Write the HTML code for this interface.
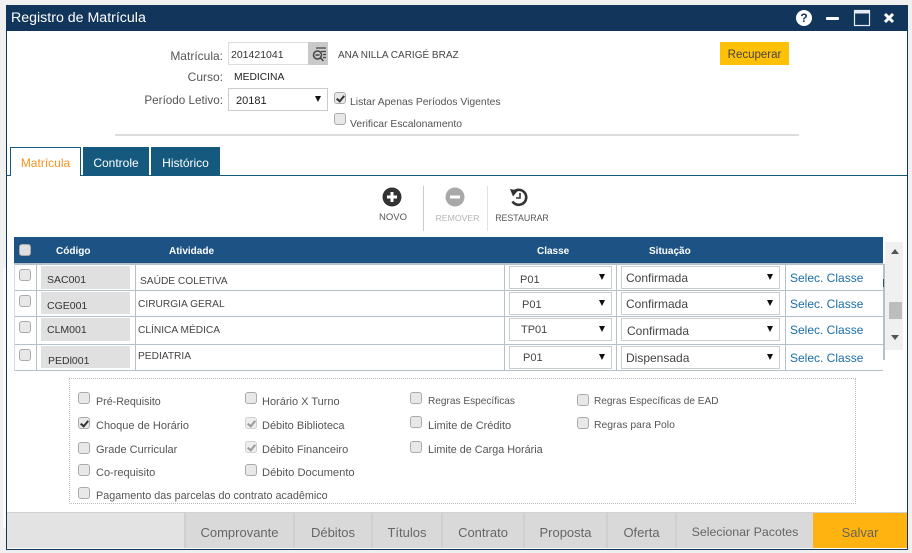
<!DOCTYPE html>
<html lang="pt">
<head>
<meta charset="utf-8">
<title>Registro de Matrícula</title>
<style>
html,body{margin:0;padding:0}
body{width:912px;height:553px;position:relative;overflow:hidden;background:#f0f0f0;font-family:"Liberation Sans",sans-serif;color:#444}
.a{position:absolute}
.t{position:absolute;white-space:nowrap;font-size:11px;line-height:14px;color:#555}
.r{text-align:right}
.cb{position:absolute;width:12px;height:12px;box-sizing:border-box;border:1px solid #aaa;border-radius:3px;background:#e8e8e8}
.cb.c::after{content:"";position:absolute;left:3px;top:1px;width:3px;height:6px;border:solid #333;border-width:0 2px 2px 0;transform:rotate(40deg)}
.cb.d{border-color:#d0d0d0;background:#eee}
.cb.d::after{border-color:#9a9a9a}
.sel{position:absolute;box-sizing:border-box;border:1px solid #ccc;background:#fff}
.arr{position:absolute;width:0;height:0;border-left:3px solid transparent;border-right:3px solid transparent;border-top:6px solid #111}
.hl{position:absolute;left:14px;width:869px;height:1px;background:#b4c2c7}
.vl{position:absolute;top:264px;height:107px;width:1px;background:#b4c2c7}
.code{position:absolute;left:41px;width:89px;background:#e0e0e0}
.lnk{position:absolute;left:790px;font-size:12px;line-height:14px;color:#1a6ea8;white-space:nowrap}
.fb{position:absolute;top:513px;height:35px;background:#d9d9d9;text-align:center;font-size:13px;line-height:39px;color:#666;box-sizing:border-box;border-left:2px solid #cfcfcf}
.h{position:absolute;white-space:nowrap;top:245px;line-height:14px;color:#fff;font-weight:bold;font-size:10px}
.cd{position:absolute;white-space:nowrap;font-size:10.500px;line-height:14px;color:#333}
.ac{position:absolute;white-space:nowrap;font-size:10.200px;line-height:14px;color:#444}
.cl{position:absolute;white-space:nowrap;font-size:11px;line-height:14px;color:#444}
.si{position:absolute;white-space:nowrap;font-size:12px;line-height:14px;color:#444}
</style>
</head>
<body>
<div class="a" style="left:3px;top:268px;width:3px;height:260px;background:#fafafa"></div>
<div class="a" style="left:6px;top:5px;width:902px;height:545px;background:#fff;box-sizing:border-box;border:1px solid #12355b"></div>
<div class="a" style="left:6px;top:5px;width:902px;height:26px;background:#12355b"></div>
<div class="t" style="left:11px;top:9px;font-size:14.200px;line-height:18px;color:#fff">Registro de Matrícula</div>

<svg class="a" style="left:790px;top:5px" width="110" height="26" viewBox="0 0 110 26">
<circle cx="14" cy="13" r="8" fill="#fff"/>
<text x="14" y="17" text-anchor="middle" font-family="Liberation Sans" font-weight="bold" font-size="12" fill="#12355b">?</text>
<rect x="36" y="12" width="13" height="3" rx="1" fill="#fff"/>
<rect x="64.500" y="5.500" width="15" height="15" fill="none" stroke="#e6eef5" stroke-width="1.200"/>
<rect x="64.500" y="5.500" width="15" height="3" fill="#e6eef5"/>
<path d="M95 9l8 8M103 9l-8 8" stroke="#fff" stroke-width="3"/>
</svg>

<div class="t r" style="left:120px;width:103px;top:49px;font-size:12px">Matrícula:</div>
<div class="a" style="left:228px;top:42px;width:80px;height:23px;box-sizing:border-box;border:1px solid #ddd;border-right:0"></div>
<div class="t" style="left:231px;top:48px;font-size:10.500px;color:#333">201421041</div>
<div class="a" style="left:308px;top:42px;width:20px;height:23px;background:#c9c9c9"></div>
<svg class="a" style="left:310px;top:45px" width="18" height="18" viewBox="0 0 18 18">
<path d="M6 3h10M11 6.500h5M13 9.500h3M13 12.500h3" stroke="#444" stroke-width="1.300" fill="none"/>
<circle cx="7.500" cy="10" r="4" stroke="#444" stroke-width="1.500" fill="none"/>
<path d="M5.500 10h4M10.500 13l3 3" stroke="#444" stroke-width="1.500"/>
</svg>
<div class="t" style="left:338px;top:49px;font-size:10px;color:#444">ANA NILLA CARIGÉ BRAZ</div>
<div class="a" style="left:720px;top:42px;width:69px;height:23px;background:#ffc107"></div>
<div class="t" style="left:720px;width:69px;text-align:center;top:48px;font-size:11.500px;color:#444">Recuperar</div>

<div class="t r" style="left:120px;width:103px;top:70px;font-size:12px">Curso:</div>
<div class="t" style="left:234px;top:71px;font-size:10.300px;color:#222">MEDICINA</div>

<div class="t r" style="left:120px;width:103px;top:94px;font-size:11.700px">Período Letivo:</div>
<div class="sel" style="left:228px;top:88px;width:100px;height:23px"></div>
<div class="t" style="left:236px;top:94px;font-size:11px;color:#222">20181</div>
<div class="arr" style="left:315px;top:96px"></div>
<div class="cb c" style="left:334px;top:92px"></div>
<div class="t" style="left:350px;top:96px;font-size:10.400px">Listar Apenas Períodos Vigentes</div>
<div class="cb" style="left:334px;top:113px"></div>
<div class="t" style="left:350px;top:118px;font-size:10.400px">Verificar Escalonamento</div>
<div class="a" style="left:115px;top:134px;width:684px;height:2px;background:#ddd"></div>

<div class="a" style="left:7px;top:175px;width:900px;height:1px;background:#155a7e"></div>
<div class="a" style="left:10px;top:147px;width:71px;height:29px;box-sizing:border-box;background:#fff;border:1px solid #155a7e;border-bottom:0"></div>
<div class="t" style="left:10px;width:71px;text-align:center;top:156px;font-size:12px;color:#f7931e">Matrícula</div>
<div class="a" style="left:83px;top:147px;width:66px;height:28px;background:#155a7e"></div>
<div class="t" style="left:83px;width:66px;text-align:center;top:156px;font-size:12px;color:#fff">Controle</div>
<div class="a" style="left:151px;top:147px;width:69px;height:28px;background:#155a7e"></div>
<div class="t" style="left:151px;width:69px;text-align:center;top:156px;font-size:12px;color:#fff">Histórico</div>

<svg class="a" style="left:380px;top:186px" width="170" height="24" viewBox="0 0 170 24">
<circle cx="12" cy="11" r="9.500" fill="#333"/>
<path d="M12 6v10M7 11h10" stroke="#fff" stroke-width="3"/>
<circle cx="75" cy="11" r="9.500" fill="#a9a9a9"/>
<path d="M70 11h10" stroke="#fff" stroke-width="3"/>
<path d="M134 5.500a7.500 7.500 0 1 1-1.500 10" fill="none" stroke="#333" stroke-width="2.600"/>
<path d="M130 3l8 1.500-5 6z" fill="#333"/>
<path d="M140 7v5h-4" fill="none" stroke="#333" stroke-width="1.600"/>
</svg>
<div class="a" style="left:423px;top:186px;width:1px;height:45px;background:#ccc"></div>
<div class="a" style="left:487px;top:186px;width:1px;height:45px;background:#e2e2e2"></div>
<div class="t" style="left:372px;width:42px;text-align:center;top:211px;font-size:9.500px">NOVO</div>
<div class="t" style="left:430px;width:55px;text-align:center;top:211px;font-size:8.700px;color:#b5b5b5">REMOVER</div>
<div class="t" style="left:490px;width:64px;text-align:center;top:211px;font-size:8.800px">RESTAURAR</div>

<div class="a" style="left:14px;top:237px;width:869px;height:26px;background:#1c5384"></div>
<div class="cb" style="left:19px;top:244px;background:#e0e0e0"></div>
<div class="h" style="left:56px">Código</div>
<div class="h" style="left:169px">Atividade</div>
<div class="h" style="left:537px">Classe</div>
<div class="h" style="left:649px">Situação</div>

<div class="hl" style="top:263px;height:2px"></div>
<div class="hl" style="top:290px"></div>
<div class="hl" style="top:316px"></div>
<div class="hl" style="top:344px"></div>
<div class="hl" style="top:370px"></div>
<div class="vl" style="left:14px;background:#d5dde0"></div>
<div class="vl" style="left:36px"></div>
<div class="vl" style="left:135px"></div>
<div class="vl" style="left:504px"></div>
<div class="vl" style="left:616px"></div>
<div class="vl" style="left:785px"></div>
<div class="vl" style="left:883px;width:2px;height:96px"></div>
<div class="a" style="left:883px;top:279px;width:1px;height:8px;background:#1c5384"></div>

<div class="cb" style="left:19px;top:269px"></div>
<div class="code" style="top:266px;height:23px"></div>
<div class="cd" style="left:47px;top:273px">SAC001</div>
<div class="ac" style="left:140px;top:275px">SAÚDE COLETIVA</div>
<div class="sel" style="left:509px;top:266px;width:103px;height:23px"></div>
<div class="cl" style="left:520px;top:273px">P01</div>
<div class="arr" style="left:599px;top:274px"></div>
<div class="sel" style="left:621px;top:266px;width:159px;height:23px"></div>
<div class="si" style="left:626px;top:271px">Confirmada</div>
<div class="arr" style="left:767px;top:274px"></div>
<div class="lnk" style="top:271px">Selec. Classe</div>

<div class="cb" style="left:19px;top:295px"></div>
<div class="code" style="top:292px;height:22px"></div>
<div class="cd" style="left:47px;top:299px">CGE001</div>
<div class="ac" style="left:138px;top:298px">CIRURGIA GERAL</div>
<div class="sel" style="left:509px;top:292px;width:103px;height:23px"></div>
<div class="cl" style="left:522px;top:298px">P01</div>
<div class="arr" style="left:599px;top:300px"></div>
<div class="sel" style="left:621px;top:292px;width:159px;height:23px"></div>
<div class="si" style="left:626px;top:297px">Confirmada</div>
<div class="arr" style="left:767px;top:300px"></div>
<div class="lnk" style="top:297px">Selec. Classe</div>

<div class="cb" style="left:19px;top:321px"></div>
<div class="code" style="top:318px;height:23px"></div>
<div class="cd" style="left:47px;top:323px">CLM001</div>
<div class="ac" style="left:138px;top:324px">CLÍNICA MÉDICA</div>
<div class="sel" style="left:509px;top:318px;width:103px;height:23px"></div>
<div class="cl" style="left:521px;top:323px">TP01</div>
<div class="arr" style="left:599px;top:326px"></div>
<div class="sel" style="left:621px;top:318px;width:159px;height:23px"></div>
<div class="si" style="left:627px;top:324px">Confirmada</div>
<div class="arr" style="left:767px;top:326px"></div>
<div class="lnk" style="top:323px">Selec. Classe</div>

<div class="cb" style="left:19px;top:349px"></div>
<div class="code" style="top:346px;height:22px"></div>
<div class="cd" style="left:48px;top:354px">PEDl001</div>
<div class="ac" style="left:138px;top:350px">PEDIATRIA</div>
<div class="sel" style="left:509px;top:346px;width:103px;height:23px"></div>
<div class="cl" style="left:523px;top:351px">P01</div>
<div class="arr" style="left:599px;top:354px"></div>
<div class="sel" style="left:621px;top:346px;width:159px;height:23px"></div>
<div class="si" style="left:626px;top:351px">Dispensada</div>
<div class="arr" style="left:767px;top:354px"></div>
<div class="lnk" style="top:351px">Selec. Classe</div>

<div class="a" style="left:885px;top:242px;width:18px;height:108px;background:#f0f0f0"></div>
<div class="a" style="left:889px;top:302px;width:13px;height:17px;background:#bdbdbd"></div>
<div class="a" style="left:891px;top:249px;width:0;height:0;border-left:4px solid transparent;border-right:4px solid transparent;border-bottom:5px solid #555"></div>
<div class="a" style="left:891px;top:335px;width:0;height:0;border-left:4px solid transparent;border-right:4px solid transparent;border-top:5px solid #555"></div>

<div class="a" style="left:69px;top:378px;width:787px;height:126px;box-sizing:border-box;border:1px dotted #bbb"></div>

<div class="cb" style="left:78px;top:392px"></div><div class="t" style="left:96px;top:395px;font-size:10.700px">Pré-Requisito</div>
<div class="cb c" style="left:78px;top:417px"></div><div class="t" style="left:96px;top:419px">Choque de Horário</div>
<div class="cb" style="left:78px;top:442px"></div><div class="t" style="left:96px;top:443px">Grade Curricular</div>
<div class="cb" style="left:78px;top:464px"></div><div class="t" style="left:96px;top:466px">Co-requisito</div>
<div class="cb" style="left:78px;top:487px"></div><div class="t" style="left:96px;top:489px;font-size:10.800px">Pagamento das parcelas do contrato acadêmico</div>

<div class="cb" style="left:245px;top:392px"></div><div class="t" style="left:262px;top:395px">Horário X Turno</div>
<div class="cb c d" style="left:245px;top:417px"></div><div class="t" style="left:262px;top:419px">Débito Biblioteca</div>
<div class="cb c d" style="left:245px;top:441px"></div><div class="t" style="left:262px;top:443px">Débito Financeiro</div>
<div class="cb" style="left:245px;top:464px"></div><div class="t" style="left:262px;top:466px;font-size:11.200px">Débito Documento</div>

<div class="cb" style="left:410px;top:392px"></div><div class="t" style="left:428px;top:395px;font-size:10.100px">Regras Específicas</div>
<div class="cb" style="left:410px;top:416px"></div><div class="t" style="left:428px;top:419px">Limite de Crédito</div>
<div class="cb" style="left:410px;top:441px"></div><div class="t" style="left:428px;top:443px;font-size:10.800px">Limite de Carga Horária</div>

<div class="cb" style="left:577px;top:394px"></div><div class="t" style="left:594px;top:395px;font-size:10.100px">Regras Específicas de EAD</div>
<div class="cb" style="left:577px;top:417px"></div><div class="t" style="left:594px;top:419px;font-size:10.400px">Regras para Polo</div>

<div class="a" style="left:7px;top:512px;width:900px;height:36px;background:#e3e3e3;border-top:1px solid #d2d2d2;box-sizing:border-box"></div>
<div class="fb" style="left:184px;width:109px">Comprovante</div>
<div class="fb" style="left:293px;width:78px">Débitos</div>
<div class="fb" style="left:371px;width:70px">Títulos</div>
<div class="fb" style="left:441px;width:82px">Contrato</div>
<div class="fb" style="left:523px;width:83px">Proposta</div>
<div class="fb" style="left:606px;width:69px">Oferta</div>
<div class="fb" style="left:675px;width:138px;font-size:12.400px">Selecionar Pacotes</div>
<div class="fb" style="left:813px;width:94px;background:#ffb311;border-left:0;color:#665">Salvar</div>
</body>
</html>
